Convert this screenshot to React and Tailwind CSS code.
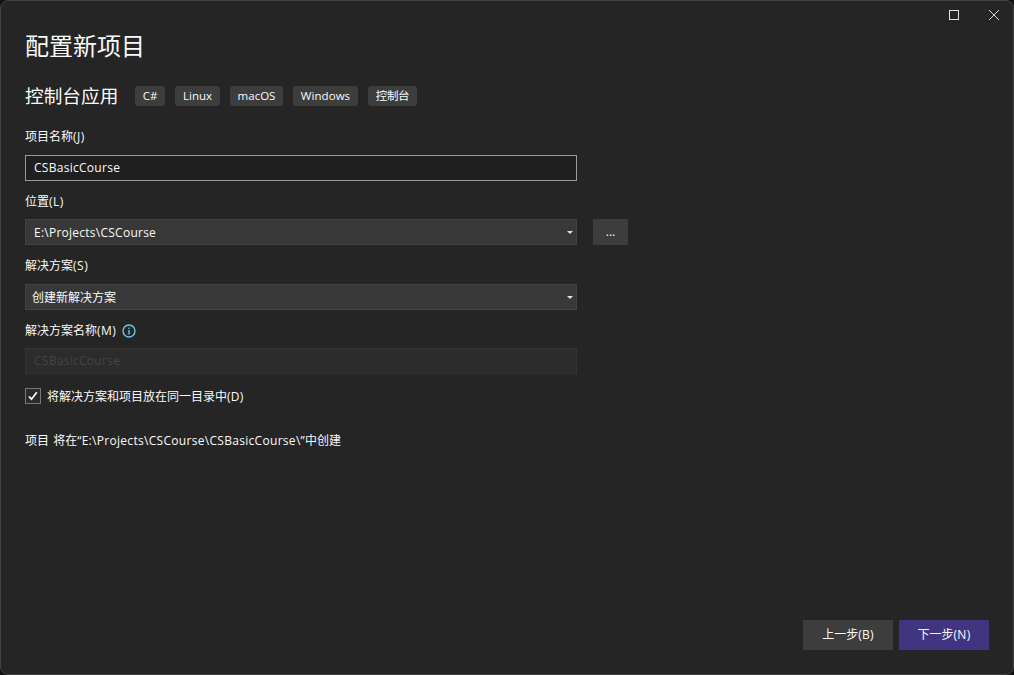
const tags = [
  { label: 'C#', size: 'w-[30px]' },
  { label: 'Linux', size: 'w-[45px]' },
  { label: 'macOS', size: 'w-[53px]' },
  { label: 'Windows', size: 'w-[65px] tracking-[0.05px]' },
  { label: '控制台', size: 'w-[49px] tracking-[-0.4px]' },
];

function TitleBar() {
  return (
    <div className="flex h-7 shrink-0 items-center justify-end gap-[30px] pr-[14px]">
      <button aria-label="最大化" className="size-[10px] border border-[#e4e4e4]" />
      <button aria-label="关闭" className="size-[10px]">
        <svg viewBox="0 0 10 10" className="block size-[10px]" fill="none" stroke="#d6d6d6" strokeWidth="1">
          <path d="M0 0l10 10M10 0L0 10" />
        </svg>
      </button>
    </div>
  );
}

function Label({ text, hotkey, children }) {
  return (
    <div className="flex h-[18px] items-center leading-[18px]">
      <span>{text}</span>
      <span className="tracking-[0.5px]">({hotkey})</span>
      {children}
    </div>
  );
}

function Select({ value, className }) {
  return (
    <div className={`flex h-[26px] w-[552px] items-center justify-between border border-[#424242] bg-[#383838] pr-[3px] ${className}`}>
      <span className="pt-[2px]">{value}</span>
      <svg viewBox="0 0 6 3" className="h-[3px] w-[6px]" fill="#e4e4e4">
        <path d="M0 0h6L3 3z" />
      </svg>
    </div>
  );
}

export default function App() {
  return (
    <div className="h-[675px] w-[1014px] bg-[#101010] text-xs text-[#fafafa] [font-family:'Open_Sans','Noto_Sans_CJK_SC',sans-serif]">
      <div className="flex h-full flex-col rounded-lg border border-[#424242] bg-[#252525]">
        <TitleBar />
        <main className="flex flex-1 flex-col pl-6">
          <h1 className="h-[34px] text-[24px] leading-[34px]">配置新项目</h1>
          <div className="mt-[18px] flex h-[30px] items-center">
            <h2 className="w-[110px] text-[18.67px] leading-[30px]">控制台应用</h2>
            <div className="flex gap-[10px]">
              {tags.map((t) => (
                <span key={t.label} className={`flex h-5 items-center justify-center rounded-[3px] bg-[#3d3d3d] text-[11.5px] ${t.size}`}>
                  {t.label}
                </span>
              ))}
            </div>
          </div>

          <div className="mt-[17px]"><Label text="项目名称" hotkey="J" /></div>
          <div className="mt-[9px] flex h-[26px] w-[552px] items-center border border-[#9a9a9a] bg-[#1f1f1f] pl-2 tracking-[0.28px]">CSBasicCourse</div>

          <div className="mt-[12px]"><Label text="位置" hotkey="L" /></div>
          <div className="mt-[8px] flex gap-4">
            <Select value="E:\Projects\CSCourse" className="pl-2 tracking-[0.25px]" />
            <button className="h-[26px] w-[35px] bg-[#3d3d3d]">...</button>
          </div>

          <div className="mt-[12px]"><Label text="解决方案" hotkey="S" /></div>
          <div className="mt-[9px]"><Select value="创建新解决方案" className="pl-1.5" /></div>

          <div className="mt-[12px]">
            <Label text="解决方案名称" hotkey="M">
              <svg viewBox="0 0 14 14" className="ml-[6px] size-[14px]" fill="none" stroke="#6cc5e8" strokeWidth="1.4">
                <circle cx="7" cy="7" r="6" />
                <path d="M7 6v4.500M7 3.500v1.400" />
              </svg>
            </Label>
          </div>
          <div className="mt-[8px] flex h-[26px] w-[552px] items-center border border-[#333333] bg-[#2c2c2c] pl-2 tracking-[0.28px] text-[#444444]">CSBasicCourse</div>

          <label className="mt-[14px] flex h-4 items-center gap-[6px]">
            <span className="flex size-4 items-center justify-center border border-[#777777] bg-[#2b2b2b]">
              <svg viewBox="0 0 10 10" className="size-[10px]" fill="none" stroke="#fafafa" strokeWidth="1.800">
                <path d="M1 5.500l2.500 2.700L8.800 1.300" />
              </svg>
            </span>
            <span className="pt-[2px]">将解决方案和项目放在同一目录中<span className="tracking-[0.3px]">(D)</span></span>
          </label>
          <p className="mt-[28px] leading-[18px]">
            项目<span className="tracking-[1px]"> </span>将在<span className="tracking-[0.3px]">“E:\Projects\CSCourse\CSBasicCourse\”</span>中创建
          </p>
        </main>
        <footer className="flex justify-end gap-1.5 pr-6 pb-6">
          <button className="h-[30px] w-[90px] bg-[#3d3d3d]">上一步<span className="tracking-[0.3px]">(B)</span></button>
          <button className="h-[30px] w-[90px] bg-[#413582]">下一步<span className="tracking-[0.3px]">(N)</span></button>
        </footer>
      </div>
    </div>
  );
}
